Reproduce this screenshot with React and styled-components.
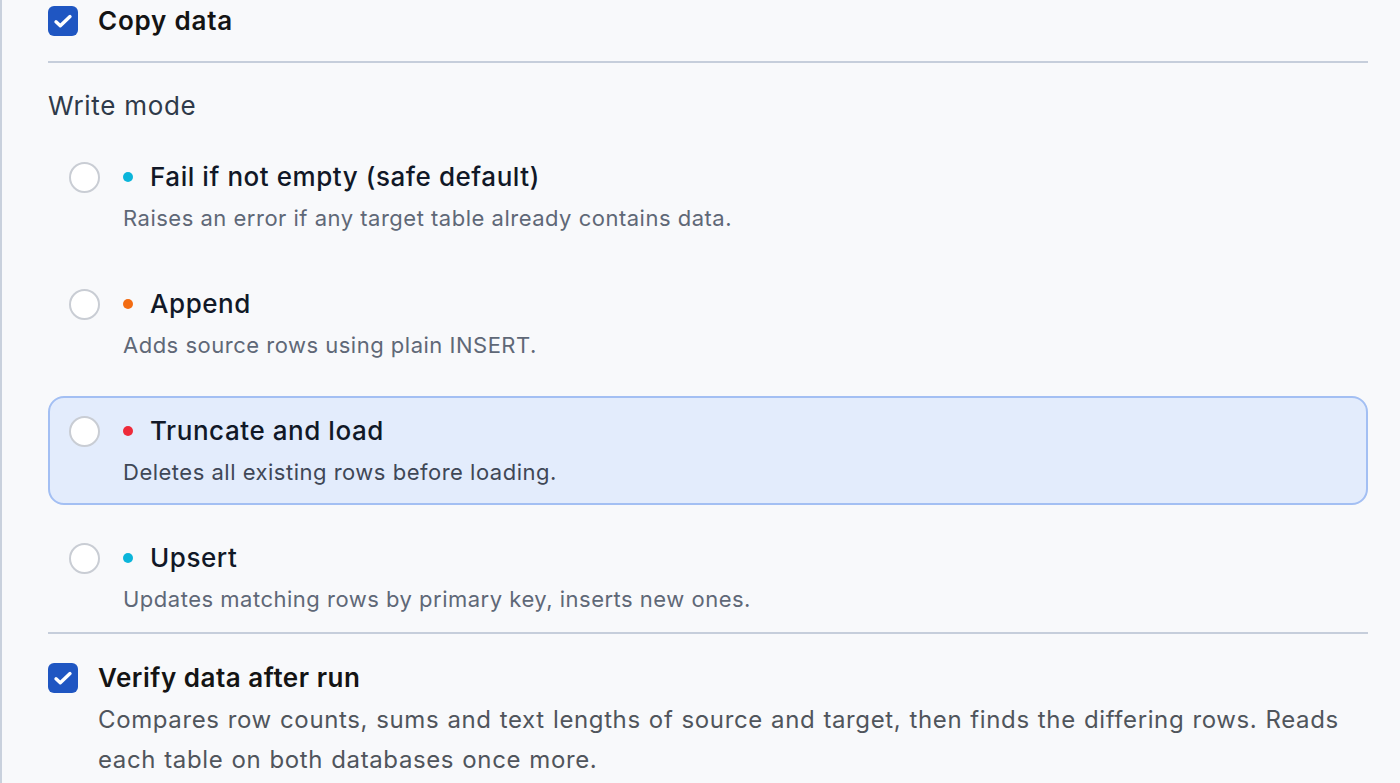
import React, {useState} from 'react';
import styled, {createGlobalStyle} from 'styled-components';

const GlobalStyle = createGlobalStyle`
    html, body {
        margin: 0;
        padding: 0;
        background: #f8f9fb;
    }
    body {
        font-family: Inter, "Noto Sans", sans-serif;
        -webkit-font-smoothing: antialiased;
    }
`;

const Panel = styled.section`
    min-height: 783px;
    box-sizing: border-box;
    border-left: 2px solid #c9d1dd;
    padding: 5px 32px 0 46px;
`;

const CheckRow = styled.label`
    display: flex;
    align-items: ${props => props.align || 'center'};
    gap: 20px;
    cursor: pointer;
`;

const CheckBox = styled.span`
    flex: 0 0 30px;
    width: 30px;
    height: 30px;
    border-radius: 6px;
    background: #1f56c2;
    display: flex;
    align-items: center;
    justify-content: center;
    margin-top: ${props => props.offset || '0px'};
`;

const CheckTitle = styled.span`
    font-size: 26px;
    line-height: 32px;
    font-weight: 600;
    letter-spacing: ${props => props.spacing || '0.55px'};
    color: #141414;
`;

const CheckText = styled.div`
    display: flex;
    flex-direction: column;
`;

const CheckDesc = styled.p`
    margin: 6px 0 0;
    font-size: 24px;
    line-height: 40px;
    letter-spacing: 0.62px;
    word-spacing: 0.8px;
    color: #50555c;
`;

const Divider = styled.hr`
    border: none;
    height: 2px;
    background: #c6cedb;
    margin: ${props => props.margin};
`;

const SectionLabel = styled.div`
    font-size: 26px;
    line-height: 32px;
    letter-spacing: 0.7px;
    color: #2f3a4a;
    margin-bottom: 20px;
`;

const OptionList = styled.div`
    display: flex;
    flex-direction: column;
    gap: 18px;
`;

const Option = styled.div`
    display: grid;
    grid-template-columns: 31px 23px 10px 17px 1fr;
    grid-template-rows: 32px auto;
    row-gap: 10px;
    align-items: center;
    padding: 17px 18px 16px 19px;
    border: 2px solid ${props => props.selected ? '#a3bff3' : 'transparent'};
    background: ${props => props.selected ? '#e3ecfc' : 'transparent'};
    border-radius: 16px;
    cursor: pointer;
`;

const Radio = styled.span`
    grid-column: 1;
    grid-row: 1;
    width: 31px;
    height: 31px;
    box-sizing: border-box;
    border-radius: 50%;
    border: 2px solid #c9cdd4;
    background: #ffffff;
`;

const Dot = styled.span`
    grid-column: 3;
    grid-row: 1;
    width: 10px;
    height: 10px;
    border-radius: 50%;
    background: ${props => props.color};
`;

const OptionTitle = styled.span`
    grid-column: 5;
    grid-row: 1;
    font-size: 26px;
    line-height: 32px;
    font-weight: 500;
    letter-spacing: 0.56px;
    color: #111827;
`;

const OptionDesc = styled.span`
    grid-column: 3 / 6;
    grid-row: 2;
    font-size: 22px;
    line-height: 30px;
    letter-spacing: 0.5px;
    color: ${props => props.selected ? '#3f4756' : '#5f6877'};
`;

const Check = () => (
    <svg width="24" height="24" viewBox="0 0 24 24" fill="none" stroke="#fff" strokeWidth="3.4" strokeLinecap="round" strokeLinejoin="round">
        <path d="M5 12.8l4.3 4L19 7.6" />
    </svg>
);

const modes = [
    {id: 'fail', title: 'Fail if not empty (safe default)', desc: 'Raises an error if any target table already contains data.', color: '#0bb5da'},
    {id: 'append', title: 'Append', desc: 'Adds source rows using plain INSERT.', color: '#f36c12'},
    {id: 'truncate', title: 'Truncate and load', desc: 'Deletes all existing rows before loading.', color: '#ee2a3a'},
    {id: 'upsert', title: 'Upsert', desc: 'Updates matching rows by primary key, inserts new ones.', color: '#0bb5da'},
];

const App = () => {
    const [mode, setMode] = useState('truncate');

    return (
        <>
            <GlobalStyle />
            <Panel>
                <CheckRow>
                    <CheckBox><Check /></CheckBox>
                    <CheckTitle spacing="0.78px">Copy data</CheckTitle>
                </CheckRow>

                <Divider margin="24px 0 27px" />

                <SectionLabel>Write mode</SectionLabel>
                <OptionList>
                    {modes.map(m => (
                        <Option key={m.id} selected={mode === m.id} onClick={() => setMode(m.id)}>
                            <Radio />
                            <Dot color={m.color} />
                            <OptionTitle>{m.title}</OptionTitle>
                            <OptionDesc selected={mode === m.id}>{m.desc}</OptionDesc>
                        </Option>
                    ))}
                </OptionList>

                <Divider margin="0 0 28px" />

                <CheckRow align="flex-start">
                    <CheckBox offset="1px"><Check /></CheckBox>
                    <CheckText>
                        <CheckTitle spacing="0.52px">Verify data after run</CheckTitle>
                        <CheckDesc>
                            Compares row counts, sums and text lengths of source and target, then finds the differing rows. Reads each table on both databases once more.
                        </CheckDesc>
                    </CheckText>
                </CheckRow>
            </Panel>
        </>
    );
};

export default App;
